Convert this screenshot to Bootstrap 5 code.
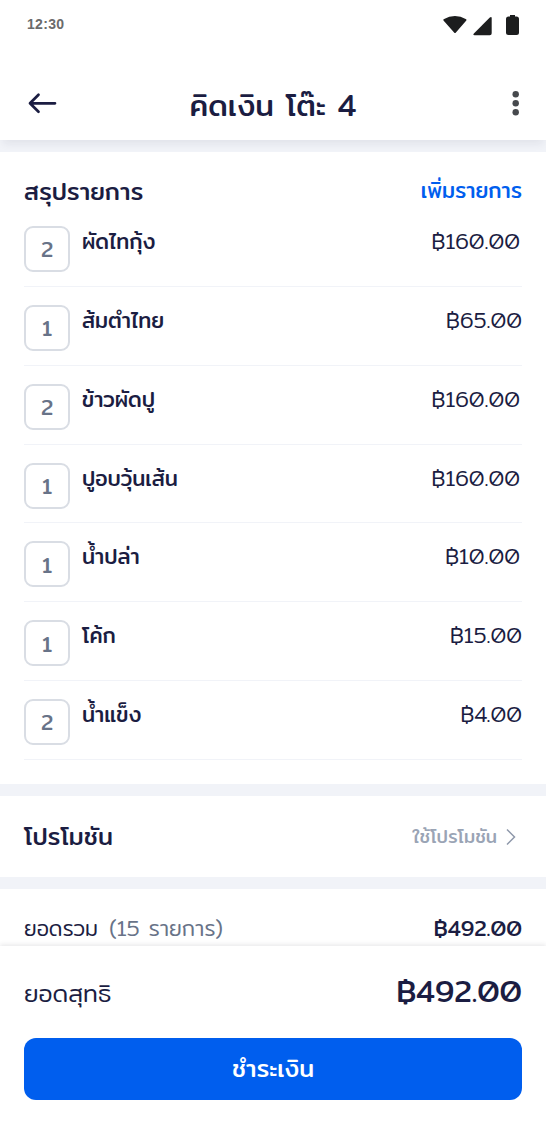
<!DOCTYPE html>
<html lang="th">
<head>
<meta charset="utf-8">
<meta name="viewport" content="width=device-width, initial-scale=1">
<title>คิดเงิน โต๊ะ 4</title>
<link href="https://cdn.jsdelivr.net/npm/bootstrap@5.3.0/dist/css/bootstrap.min.css" rel="stylesheet">
<style>
:root{--ink:#1b1d42;--slate:#687388;--band:#f1f3f8;--brand:#005eee}
body{font-family:Mitr,Prompt,Kanit,sans-serif;font-weight:400;color:var(--ink);background:#fff;line-height:1.2}
.screen{width:546px;height:1136px;overflow:hidden}
.statusbar{height:50px;padding:0 26px 0 27px}
.statusbar svg{margin-top:13px}
.clock{font:700 14px/48px "Liberation Sans",sans-serif;letter-spacing:.3px;color:#6b6b6b}
.topbar{height:89.5px;padding-top:18px;box-shadow:0 7px 8px -3px rgba(30,35,50,.07);z-index:2}
.topbar h1{font-size:30.2px;line-height:36px;font-weight:400;padding-top:3px}
.band{height:12px;background:var(--band);flex:none}
.money{font-size:21.3px;font-weight:300;line-height:31px;white-space:nowrap}
.money.strong-sum{font-weight:400}
.inset{padding-right:2px}
.items{height:632.5px;padding:0 24px}
.items-head{height:56.6px;padding-top:25px}
.sect{font-size:24.2px}
.add{font-size:21.2px;padding-top:1px;color:var(--brand);text-decoration:none}
.item{height:78.85px;padding-top:18px;border-bottom:1.5px solid #f1f3f8}
.qty{width:46px;height:46px;padding-top:2px;border:2px solid #d9dde4;border-radius:9px;font-size:21.2px;color:var(--slate);margin-right:12px}
.dish{font-size:21.2px;line-height:31px}
.promo{height:81px;padding:0 29px 0 24px}
.use{font-size:18.2px;color:#9aa4b5}
.sum{height:57px;padding:24px 24px 0}
.regular{font-size:21.2px;font-weight:300;line-height:30px}
.count{color:var(--slate);margin-left:2.500px;font-size:21.400px}
.foot{height:190px;background:#fff;box-shadow:0 -1px 5px rgba(30,35,50,.12);z-index:2;padding:0 24px}
.net{height:91.500px}
.net .regular{font-size:24.3px;padding-top:2px}
.net .money{font-size:30.3px}
.pay{height:62px;border-radius:12px;background:var(--brand);color:#fff;font-size:24px;font-weight:400}
.pay span{display:block;padding-bottom:2px}
.pay:hover{background:var(--brand);color:#fff}
</style>
</head>
<body>
<main class="screen d-flex flex-column">
<div class="statusbar d-flex justify-content-between">
<span class="clock">12:30</span>
<svg width="78" height="24" viewBox="0 0 78 24" fill="#1c1d1e"><path d="M1.600 6.300Q13-.5 24.200 6.300 24.700 7 24.100 7.700L13.900 19.600Q13 20.600 12.100 19.600L1.700 7.700Q1.100 7 1.600 6.300Z"/><path d="M47.800 4.600q1.700-1.400 1.900.5v15.100q0 2-2 2H32.500q-2-.2-.6-1.800Z"/><path d="M68 2h5v1.500h1.500q2.500 0 2.500 2.500v13.500q0 2.500-2.500 2.500h-8q-2.500 0-2.500-2.500V6q0-2.500 2.500-2.500H68Z"/></svg>
</div>
<header class="topbar bg-white d-flex position-relative justify-content-between align-items-center">
<svg width="60" height="36" viewBox="0 0 60 36" fill="none" stroke="#1b1d42" stroke-width="2.7" stroke-linecap="round" stroke-linejoin="round"><path d="M55 17.300H30M38.500 8.800 30 17.300l8.500 8.500"/></svg>
<h1 class="m-0">คิดเงิน โต๊ะ 4</h1>
<svg width="60" height="36" viewBox="0 0 60 36" fill="#46494d"><circle cx="29.700" cy="8.300" r="3.200"/><circle cx="29.700" cy="17.300" r="3.200"/><circle cx="29.700" cy="26.300" r="3.200"/></svg>
</header>
<div class="band"></div>
<section class="items">
<div class="items-head d-flex justify-content-between"><span class="sect">สรุปรายการ</span><a class="add" href="#">เพิ่มรายการ</a></div>
<div class="item d-flex"><span class="qty d-flex align-items-center justify-content-center">2</span><span class="dish">ผัดไทกุ้ง</span><span class="money inset ms-auto">฿160.00</span></div>
<div class="item d-flex"><span class="qty d-flex align-items-center justify-content-center">1</span><span class="dish">ส้มตำไทย</span><span class="money ms-auto">฿65.00</span></div>
<div class="item d-flex"><span class="qty d-flex align-items-center justify-content-center">2</span><span class="dish">ข้าวผัดปู</span><span class="money inset ms-auto">฿160.00</span></div>
<div class="item d-flex"><span class="qty d-flex align-items-center justify-content-center">1</span><span class="dish">ปูอบวุ้นเส้น</span><span class="money inset ms-auto">฿160.00</span></div>
<div class="item d-flex"><span class="qty d-flex align-items-center justify-content-center">1</span><span class="dish">น้ำปล่า</span><span class="money inset ms-auto">฿10.00</span></div>
<div class="item d-flex"><span class="qty d-flex align-items-center justify-content-center">1</span><span class="dish">โค้ก</span><span class="money ms-auto">฿15.00</span></div>
<div class="item d-flex"><span class="qty d-flex align-items-center justify-content-center">2</span><span class="dish">น้ำแข็ง</span><span class="money ms-auto">฿4.00</span></div>
</section>
<div class="band"></div>
<section class="promo d-flex align-items-center justify-content-between"><span class="sect">โปรโมชัน</span><span class="use d-flex align-items-center gap-2">ใช้โปรโมชัน<svg width="12" height="18" viewBox="0 0 12 18" fill="none" stroke="#8e98aa" stroke-width="1.500"><path d="M2 1.500 9.500 9 2 16.500"/></svg></span></section>
<div class="band"></div>
<section class="sum d-flex justify-content-between"><span class="regular">ยอดรวม <span class="count">(15 รายการ)</span></span><span class="money strong-sum">฿492.00</span></section>
<footer class="foot position-relative">
<div class="net d-flex justify-content-between align-items-center"><span class="regular">ยอดสุทธิ</span><span class="money strong-sum">฿492.00</span></div>
<button class="btn border-0 p-0 pay w-100"><span>ชำระเงิน</span></button>
</footer>
</main>
<script src="https://cdn.jsdelivr.net/npm/bootstrap@5.3.0/dist/js/bootstrap.bundle.min.js"></script>
</body>
</html>
